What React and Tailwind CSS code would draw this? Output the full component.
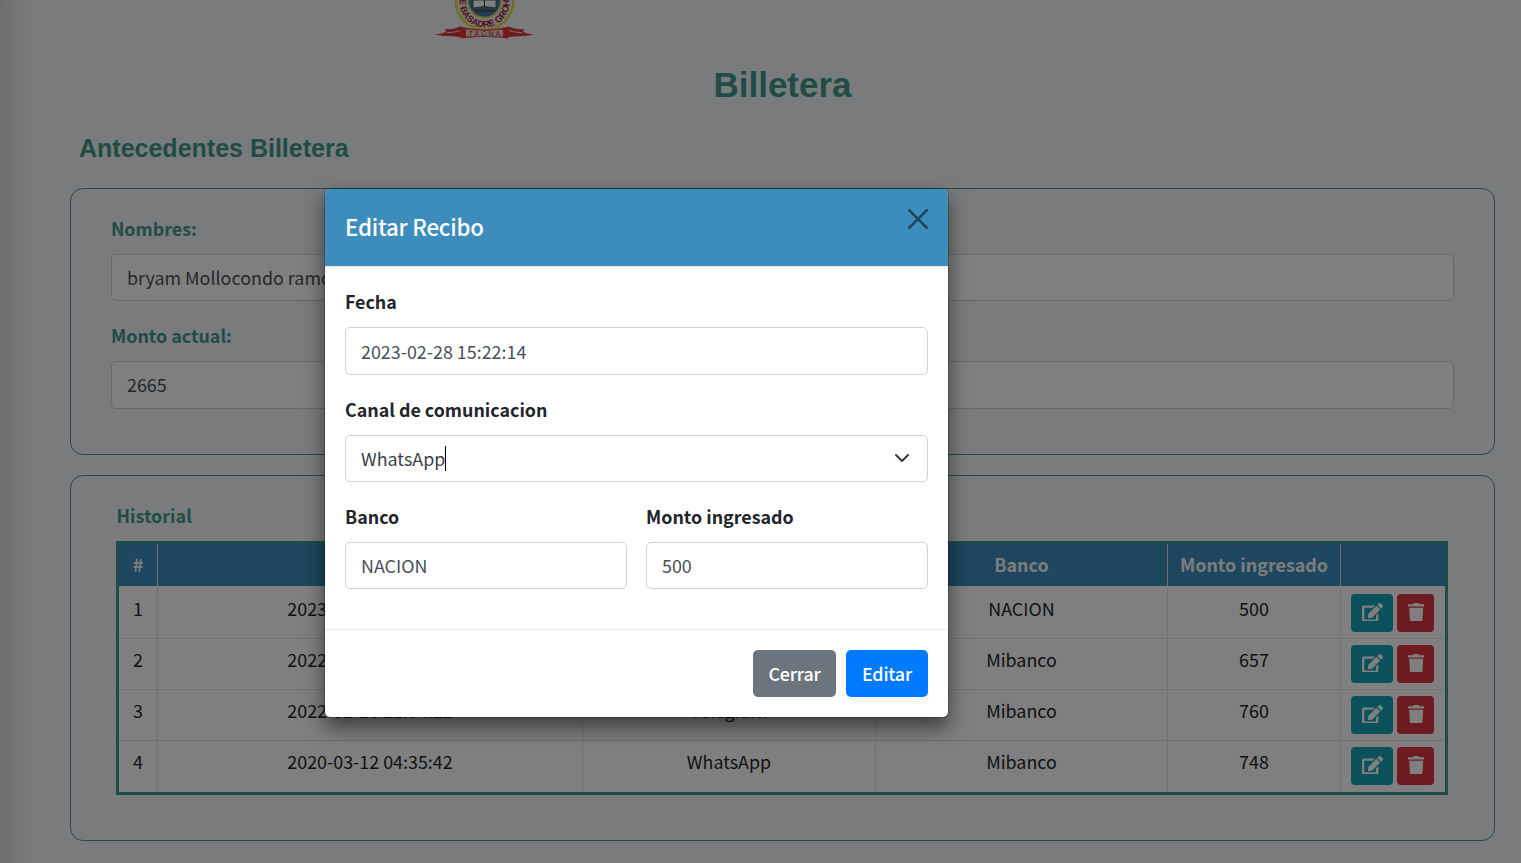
import React from 'react';

const rows = [
  ['1', '2023-02-28 15:22:14', 'WhatsApp', 'NACION', '500'],
  ['2', '2022-12-28 22:04:22', 'Telegram', 'Mibanco', '657'],
  ['3', '2022-02-28 22:04:22', 'Telegram', 'Mibanco', '760'],
  ['4', '2020-03-12 04:35:42', 'WhatsApp', 'Mibanco', '748'],
];

function Crest() {
  return (
    <svg className="h-10 w-[100px]" viewBox="0 0 100 40">
      <circle cx="49.5" cy="1" r="30" fill="#e3dc3c" />
      <circle cx="49.5" cy="1" r="27.500" fill="#ededed" />
      <circle cx="49.5" cy="1" r="17" fill="#d8c834" />
      <circle cx="49.5" cy="1" r="15.500" fill="#2f7fb5" />
      <path d="M38 0h23v8l-11.500-1.500L38 8z" fill="#fff" stroke="#444" strokeWidth=".8" />
      <path d="M49.500 0v7" stroke="#333" />
      <path d="M39 9.500h21v2.500H39z" fill="#6b4b2a" />
      <path id="ring" d="M26.900 -8A24.900 24.900 0 1 0 72.100 -8" fill="none" />
      <text fontFamily="Liberation Sans" fontWeight="700" fontSize="9.200" fill="#9f1f2a">
        <textPath href="#ring" startOffset="49.500%" textAnchor="middle">E BASADRE GROH</textPath>
      </text>
      <path d="M0 34.500c5-.5 8-1.500 11-2.500l-1-3c5 .5 10 0 15-2.500l4 3-2 8c-9-2-16-.5-27-3z" fill="#dc3338" />
      <path d="M99 34.500c-5-.5-8-1.500-11-2.500l1-3c-5 .5-10 0-15-2.500l-4 3 2 8c9-2 16-.5 27-3z" fill="#dc3338" />
      <path d="M12 32.500c5 .3 9-.5 13-2M87 32.500c-5 .3-9-.5-13-2" stroke="#f0d4d4" strokeWidth="1.200" fill="none" />
      <path d="M25 26.500c16 4 33 4 49 0l-1 12c-16-2-31-2-47 0z" fill="#e8353b" />
      <path d="M31 29.500c13 1.500 25 1.500 37 0v7c-12-.5-25-.5-37 0z" fill="#ecd6d6" />
      <text x="50.500" y="36" textAnchor="middle" fontFamily="Liberation Sans" fontSize="6.800" letterSpacing="2.200" fill="#c32028">TACNA</text>
    </svg>
  );
}

function EditIcon() {
  return (
    <svg className="-mt-[2px] h-[18.750px] w-[21px]" viewBox="0 0 576 512" fill="currentColor">
      <path d="M402.600 83.200l90.200 90.200c3.800 3.800 3.800 10 0 13.800L274.400 405.600l-92.800 10.300c-12.400 1.400-22.900-9.100-21.500-21.500l10.300-92.800L388.800 83.200c3.800-3.800 10-3.800 13.800 0zm162-22.900l-48.800-48.800c-15.200-15.200-39.900-15.200-55.200 0l-35.400 35.400c-3.800 3.800-3.800 10 0 13.800l90.200 90.200c3.800 3.800 10 3.800 13.800 0l35.400-35.400c15.200-15.300 15.200-40 0-55.200zM384 346.200V448H64V128h229.800c3.200 0 6.200-1.300 8.500-3.500l40-40c7.600-7.600 2.200-20.500-8.500-20.500H48C21.500 64 0 85.500 0 112v352c0 26.500 21.500 48 48 48h352c26.500 0 48-21.500 48-48V306.200c0-10.700-12.900-16-20.500-8.500l-40 40c-2.200 2.300-3.500 5.300-3.500 8.500z" />
    </svg>
  );
}

function TrashIcon() {
  return (
    <svg className="-mt-[2px] ml-px h-[18.750px] w-[16.400px]" viewBox="0 0 448 512" fill="currentColor">
      <path d="M432 32H312l-9.400-18.700A24 24 0 0 0 281.100 0H166.800a23.720 23.720 0 0 0-21.400 13.300L136 32H16A16 16 0 0 0 0 48v32a16 16 0 0 0 16 16h416a16 16 0 0 0 16-16V48a16 16 0 0 0-16-16zM53.200 467a48 48 0 0 0 47.900 45h245.800a48 48 0 0 0 47.900-45L416 128H32z" />
    </svg>
  );
}

function PageField({ label, value, size = 'h-[47px] pb-px' }) {
  return (
    <div>
      <div className="flex h-[30px] items-center pb-[2px] text-[17.850px] font-bold text-[#409890]">{label}</div>
      <div className={`mt-[10px] flex items-center rounded-[5px] border border-[#ced4da] bg-white px-[15px] text-[#495057] ${size}`}>{value}</div>
    </div>
  );
}

function ModalField({ label, children, size = 'h-[47px] pb-px' }) {
  return (
    <div className="min-w-0">
      <div className="flex h-[30px] items-center pb-[2px] text-[17.850px] font-bold">{label}</div>
      <div className={`mt-[10px] flex items-center justify-between rounded-[5px] border border-[#ced4da] bg-white px-[15px] text-[#495057] ${size}`}>{children}</div>
    </div>
  );
}

export default function App() {
  return (
    <div className="relative h-[863px] w-[1521px] overflow-hidden bg-[#f4f6f9] text-[17.900px] leading-[30px] text-[#212529] [font-family:'Noto_Sans_CJK_SC',sans-serif]">
      <div className="absolute -top-10 -left-5 h-[943px] w-5 shadow-[0_14px_35px_rgba(0,0,0,0.25)]" />
      <div className="flex flex-col pr-[26px] pl-[70px]">
        <div className="h-[50px] pl-[365px]"><Crest /></div>
        <h1 className="h-[70px] text-center text-[35px] leading-[69px] font-bold text-[#409890] [font-family:'Liberation_Sans',sans-serif]">Billetera</h1>
        <h2 className="mt-2 h-[40px] pl-[9px] text-[25px] leading-[40px] font-bold text-[#409890] [font-family:'Liberation_Sans',sans-serif]">Antecedentes Billetera</h2>

        <section className="mt-5 flex h-[267px] flex-col gap-[20px] rounded-[13px] border border-[#409890] px-10 pt-[25px]">
          <PageField label="Nombres:" value="bryam Mollocondo ramos" />
          <PageField label="Monto actual:" value="2665" size="h-[48px] pb-[2px]" />
        </section>

        <section className="mt-5 h-[366px] rounded-[13px] border border-[#409890] pt-[25px] pr-[46px] pl-[45px]">
          <div className="flex h-[30px] items-center pb-[2px] pl-[0.500px] font-bold text-[#409890]">Historial</div>
          <div className="mt-[10px] border-[3px] border-[#409890] bg-white">
            <div className="grid h-[42px] grid-cols-[39px_425px_293px_292px_173px_104px] bg-[#3c8dbc] text-center font-bold text-[#f8f9fa]">
              {['#', 'Fecha', 'Canal', 'Banco', 'Monto ingresado', ''].map((h, i) => (
                <div key={i} className="flex items-center justify-center border-r border-[#dee2e6] pb-[2px] last:border-r-0">{h}</div>
              ))}
            </div>
            <div>
              {rows.map((r) => (
                <div key={r[0]} className="grid h-[51px] grid-cols-[39px_425px_293px_292px_173px_104px] border-b border-[#dee2e6] pt-[6px] text-center first:h-[53px] first:pt-2 last:border-b-0">
                  {r.map((c, i) => (
                    <div key={i} className="-mt-[6px] border-r border-[#dee2e6] pt-[5px]">{c}</div>
                  ))}
                  <div className="flex gap-1 pl-[10px] text-white">
                    <span className="flex h-[38px] w-[42px] items-center justify-center rounded-[4px] bg-[#17a2b8]"><EditIcon /></span>
                    <span className="flex h-[38px] w-[37px] items-center justify-center rounded-[4px] bg-[#dc3545]"><TrashIcon /></span>
                  </div>
                </div>
              ))}
            </div>
          </div>
        </section>
      </div>

      <div className="absolute inset-0 bg-black/50" />

      <div className="absolute top-[188px] left-[324px] flex h-[530px] w-[625px] flex-col rounded-[6px] border border-black/20 bg-white bg-clip-padding shadow-[0_10px_20px_rgba(0,0,0,0.5)]">
        <header className="flex h-[78px] items-start justify-between rounded-t-[5px] border-b border-[#e9ecef] bg-[#3c8dbc] px-5 pt-5">
          <h3 className="-mt-px text-[22.300px] leading-[37px] font-medium tracking-[-0.22px] text-white">Editar Recibo</h3>
          <svg className="h-5 w-5 opacity-50" viewBox="0 0 16 16"><path d="M.293.293a1 1 0 011.414 0L8 6.586 14.293.293a1 1 0 111.414 1.414L9.414 8l6.293 6.293a1 1 0 01-1.414 1.414L8 9.414l-6.293 6.293a1 1 0 01-1.414-1.414L6.586 8 .293 1.707a1 1 0 010-1.414z" /></svg>
        </header>
        <div className="flex flex-1 flex-col gap-5 px-5 pt-5">
          <ModalField label="Fecha" size="h-[48px]">2023-02-28 15:22:14</ModalField>
          <ModalField label="Canal de comunicacion">
            <span className="flex items-center text-[#3b4046]">WhatsApp<i className="h-[25px] w-px bg-black" /></span>
            <svg className="mr-[2px] h-4 w-4" viewBox="0 0 16 16"><path fill="none" stroke="#343a40" strokeLinecap="round" strokeLinejoin="round" strokeWidth="2" d="M2 5l6 6 6-6" /></svg>
          </ModalField>
          <div className="grid grid-cols-2 gap-[19px]">
            <ModalField label="Banco">NACION</ModalField>
            <ModalField label="Monto ingresado">500</ModalField>
          </div>
        </div>
        <footer className="flex h-[88px] justify-end gap-[10px] border-t border-[#e9ecef] px-5 pt-5 text-white">
          <button className="h-[47px] w-[83px] rounded-[5px] bg-[#6c757d] pb-px font-medium tracking-[-0.2px]">Cerrar</button>
          <button className="h-[47px] w-[82px] rounded-[5px] bg-[#007bff] pb-px font-medium tracking-[-0.2px]">Editar</button>
        </footer>
      </div>
    </div>
  );
}
